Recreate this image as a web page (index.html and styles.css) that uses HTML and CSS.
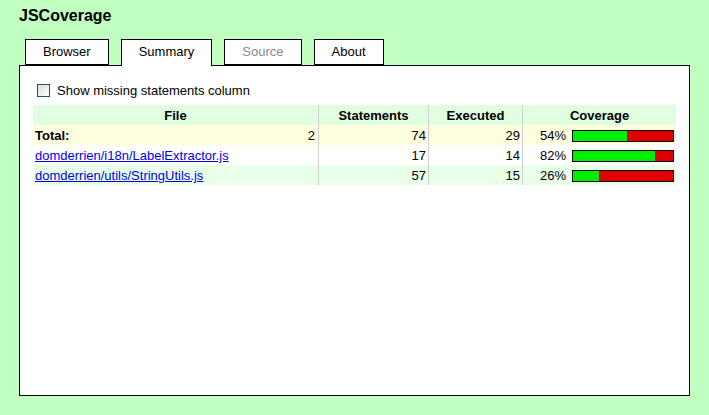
FILE: index.html
```html
<!DOCTYPE html>
<html>
<head>
<meta charset="utf-8">
<title>JSCoverage</title>
<link rel="stylesheet" href="styles.css">
</head>
<body>
<div class="page">
  <h1 class="title">JSCoverage</h1>
  <div class="tabs">
    <div class="tab">Browser</div>
    <div class="tab tab-selected">Summary</div>
    <div class="tab tab-disabled">Source</div>
    <div class="tab">About</div>
  </div>
  <div class="panel">
    <div class="option">
      <input type="checkbox" class="check" id="missing">
      <label for="missing" class="option-label">Show missing statements column</label>
    </div>
    <table class="summary">
      <colgroup>
        <col class="c-file">
        <col class="c-stmt">
        <col class="c-exec">
        <col class="c-cov">
      </colgroup>
      <thead>
        <tr class="head-row">
          <th>File</th>
          <th class="sep">Statements</th>
          <th class="sep">Executed</th>
          <th class="sep">Coverage</th>
        </tr>
      </thead>
      <tbody>
        <tr class="total-row">
          <td class="file-cell"><span class="total-label">Total:</span><span class="num">2</span></td>
          <td class="sep num-cell">74</td>
          <td class="sep num-cell">29</td>
          <td class="sep">
            <div class="cov">
              <span class="pct">54%</span>
              <div class="bar"><div class="bar-fill" style="width:54px"></div></div>
            </div>
          </td>
        </tr>
        <tr class="row-odd">
          <td><a href="#" class="file-link">domderrien/i18n/LabelExtractor.js</a></td>
          <td class="sep num-cell">17</td>
          <td class="sep num-cell">14</td>
          <td class="sep">
            <div class="cov">
              <span class="pct">82%</span>
              <div class="bar"><div class="bar-fill" style="width:82px"></div></div>
            </div>
          </td>
        </tr>
        <tr class="row-even">
          <td><a href="#" class="file-link">domderrien/utils/StringUtils.js</a></td>
          <td class="sep num-cell">57</td>
          <td class="sep num-cell">15</td>
          <td class="sep">
            <div class="cov">
              <span class="pct">26%</span>
              <div class="bar"><div class="bar-fill" style="width:26px"></div></div>
            </div>
          </td>
        </tr>
      </tbody>
    </table>
  </div>
</div>
</body>
</html>
```

FILE: styles.css
```css
html, body {
  margin: 0;
  padding: 0;
  background: #c0ffc0;
}

body {
  font-family: "Liberation Sans", Arial, sans-serif;
  font-size: 13px;
  color: #000;
}

.page {
  padding: 7px 19px 0 19px;
}

.title {
  margin: 0;
  font-size: 16px;
  font-weight: bold;
  line-height: 18px;
}

.tabs {
  display: flex;
  align-items: flex-end;
  gap: 12px;
  margin: 14px 0 0 6px;
}

.tab {
  box-sizing: border-box;
  height: 26px;
  padding: 0 17px;
  line-height: 24px;
  border: 1px solid #000;
  background: #fff;
  color: #000;
}

.tab-selected {
  position: relative;
  z-index: 1;
  height: 27px;
  margin-bottom: -1px;
  border-bottom: none;
  padding-bottom: 2px;
}

.tab-disabled {
  color: #8a8a8a;
}

.panel {
  box-sizing: border-box;
  height: 331px;
  border: 1px solid #000;
  background: #fff;
  padding: 16px 12px 0 13px;
}

.option {
  display: flex;
  align-items: center;
  height: 16px;
}

.check {
  appearance: none;
  -webkit-appearance: none;
  box-sizing: border-box;
  width: 13px;
  height: 13px;
  margin: 0 7px 0 4px;
  border: 1px solid #1c5180;
  background: linear-gradient(135deg, #dcdcd7 0%, #f2f2ef 60%, #ffffff 100%);
}

.option-label {
  line-height: 17px;
  padding-top: 1px;
}

.summary {
  margin-top: 7px;
  width: 643px;
  table-layout: fixed;
  border-collapse: separate;
  border-spacing: 0;
}

.c-file { width: 285px; }
.c-stmt { width: 110px; }
.c-exec { width: 94px; }
.c-cov { width: 154px; }

.summary th,
.summary td {
  box-sizing: border-box;
  height: 20px;
  padding: 1px 2px 0 2px;
  line-height: 19px;
  white-space: nowrap;
  vertical-align: top;
}

.summary th {
  font-weight: bold;
  text-align: center;
}

.summary .sep {
  border-left: 1px solid #d0d0d0;
}

.head-row {
  background: #e0ffe0;
}

.total-row {
  background: #ffffe0;
}

.row-odd {
  background: #ffffff;
}

.row-even {
  background: #e8ffe8;
}

.total-label {
  font-weight: bold;
  float: left;
}

.num {
  float: right;
  padding-right: 1px;
}

.num-cell {
  text-align: right;
}

.file-link {
  color: #0000ee;
  text-decoration: underline;
}

.cov {
  display: flex;
  align-items: flex-start;
  justify-content: flex-end;
  height: 19px;
}

.pct {
  margin-right: 6px;
}

.bar {
  box-sizing: border-box;
  width: 102px;
  height: 12px;
  margin-top: 4px;
  border: 1px solid #000;
  background: #e00000;
  display: flex;
}

.bar-fill {
  height: 100%;
  background: #00ee00;
}
```
